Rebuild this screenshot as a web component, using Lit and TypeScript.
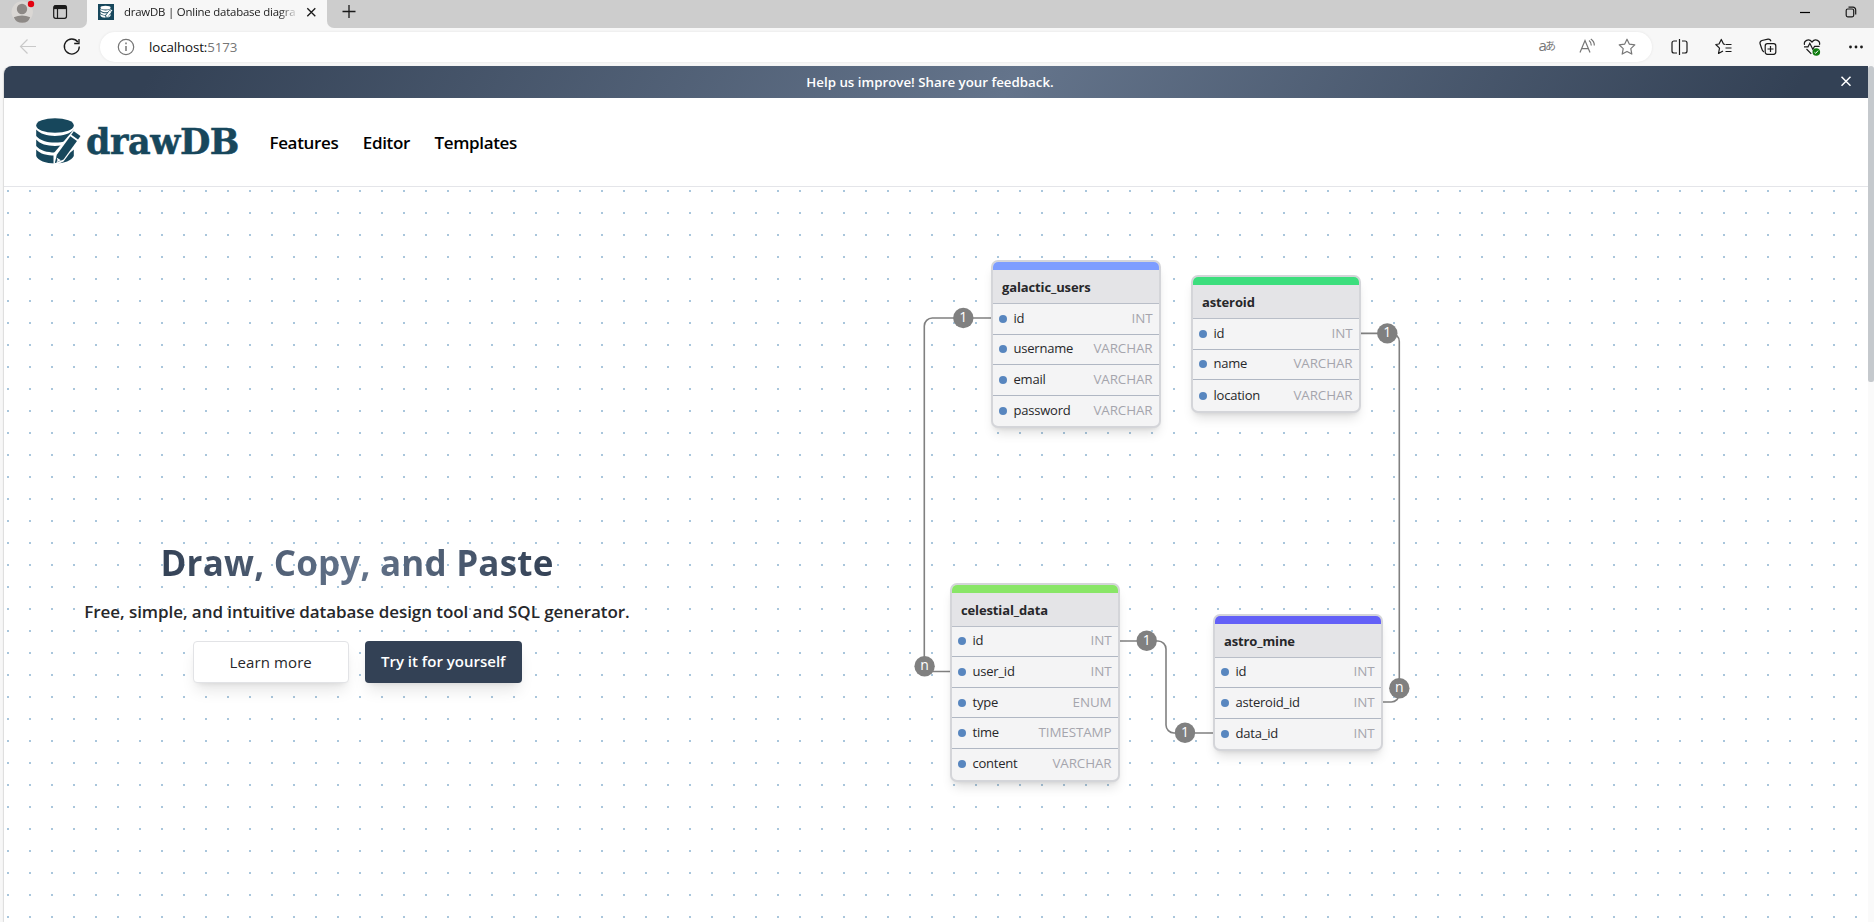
import { LitElement, html, svg, css } from "lit";
import { customElement, property } from "lit/decorators.js";

interface Field { name: string; type: string; }
interface TableData { name: string; color: string; x: number; y: number; fields: Field[]; }
interface Link { d: string; ends: { x: number; y: number; label: string }[]; }

const f = (name: string, type: string): Field => ({ name, type });

const TABLES: TableData[] = [
  { name: "galactic_users", color: "#7d9dff", x: 281, y: 73.3,
    fields: [f("id", "INT"), f("username", "VARCHAR"), f("email", "VARCHAR"), f("password", "VARCHAR")] },
  { name: "asteroid", color: "#3cde7d", x: 481, y: 88.4,
    fields: [f("id", "INT"), f("name", "VARCHAR"), f("location", "VARCHAR")] },
  { name: "celestial_data", color: "#89e667", x: 240, y: 396,
    fields: [f("id", "INT"), f("user_id", "INT"), f("type", "ENUM"), f("time", "TIMESTAMP"), f("content", "VARCHAR")] },
  { name: "astro_mine", color: "#6360f7", x: 503, y: 427,
    fields: [f("id", "INT"), f("asteroid_id", "INT"), f("data_id", "INT")] },
];

const LINKS: Link[] = [
  { d: "M281 131H222.3a8 8 0 0 0-8 8V484.5H240",
    ends: [{ x: 253.3, y: 131, label: "1" }, { x: 214.6, y: 479.3, label: "n" }] },
  { d: "M650 146.4H681.3a8 8 0 0 1 8 8V507a8 8 0 0 1-8 8H672.5",
    ends: [{ x: 677.3, y: 146.4, label: "1" }, { x: 689.3, y: 501.3, label: "n" }] },
  { d: "M410 454H448a8 8 0 0 1 8 8V538a8 8 0 0 0 8 8H503",
    ends: [{ x: 436.7, y: 453.8, label: "1" }, { x: 475, y: 545.8, label: "1" }] },
];

const databaseMark = svg`
  <ellipse cx="19" cy="7.5" rx="18.8" ry="7.3"/>
  <path d="M.2 11.6C4 16 11 17.9 19 17.9S34 16 37.8 11.6V18C34 22.6 27 24.6 19 24.6S4 22.6.2 18Z"/>
  <path d="M.2 21.5C4 26 11 27.9 19 27.9S34 26 37.8 21.5V28C34 32.5 27 34.5 19 34.5S4 32.5.2 28Z"/>
  <path d="M.2 31.5C4 36 11 37.6 19 37.6S34 36 37.8 31.5V38C36 42.5 28 45.4 19 45.4S1.5 42.5.2 38Z"/>
  <path class="cut" d="M37.8 11.5 46.5 18 27.5 43.5 17.5 48V35.5Z"/>
  <path d="M37.8 13.2 44.5 18 42 21.5 35.3 16.7Z"/>
  <path d="M34.3 18.2 41 23 27.5 41.5 18.8 45.2 20.8 36.7Z"/>
  <path class="cut" d="M20.5 39.5 25 42.2 20.5 44.2 21.5 42Z"/>`;

@customElement("db-logo")
class DbLogo extends LitElement {
  static styles = css`
    :host { display: flex; align-items: center; color: #17475c; }
    .mark { width: 46px; height: 48px; fill: #17475c; overflow: visible; }
    .cut { fill: #fff; }
    .word { font: 700 35px/44px "DejaVu Serif", serif; letter-spacing: -0.45px; margin: 0 0 0 4px; -webkit-text-stroke: 0.5px #17475c; }
  `;
  render() {
    return html`<svg class="mark" viewBox="0 0 46 48">${databaseMark}</svg><span class="word">drawDB</span>`;
  }
}

@customElement("db-table")
class DbTable extends LitElement {
  @property({ attribute: false }) table!: TableData;
  static styles = css`
    :host { display: block; width: 166px; border: 2px solid #d4d5d9; border-radius: 7px; overflow: hidden;
      background: #f4f4f5; box-shadow: 0 8px 12px -3px rgba(0,0,0,.12), 0 3px 5px -3px rgba(0,0,0,.12); }
    .strip { height: 8px; }
    .title { height: 32.7px; line-height: 34.7px; padding-left: 9px; background: #e4e4e7; color: #27272a;
      border-bottom: 1px solid #b9bec8; font-weight: 700; font-size: 13px; letter-spacing: -0.13px; }
    .row { box-sizing: border-box; height: 30.6px; display: flex; align-items: center; padding: 0 6.5px 0 6px;
      border-bottom: 1px solid #b0b7c3; font-size: 13px; letter-spacing: -0.22px; color: #27272a; }
    .row:last-child { border-bottom: 0; }
    .dot { width: 8px; height: 8px; border-radius: 50%; background: #5886bf; margin-right: 6.5px; }
    .name { flex: 1; padding-bottom: 2px; }
    .type { font-size: 13.4px; letter-spacing: -0.1px; color: #a5a5ad; padding-bottom: 2px; }
  `;
  render() {
    const t = this.table;
    return html`
      <div class="strip" style="background:${t.color}"></div>
      <div class="title">${t.name}</div>
      ${t.fields.map((x) => html`<div class="row"><span class="dot"></span><span class="name">${x.name}</span><span class="type">${x.type}</span></div>`)}`;
  }
}

@customElement("db-canvas")
class DbCanvas extends LitElement {
  static styles = css`
    :host { display: block; position: relative; }
    .links { display: block; width: 100%; height: 100%; }
    .line { fill: none; stroke: #808080; stroke-width: 1.6; }
    .end { fill: #808080; }
    .label { fill: #fff; font-size: 14px; text-anchor: middle; }
    .node { position: absolute; }
  `;
  render() {
    return html`
      <svg class="links">${LINKS.map((l) => svg`
        <path class="line" d=${l.d}/>
        ${l.ends.map((e) => svg`<circle class="end" cx=${e.x} cy=${e.y} r="10.2"/>
          <text class="label" x=${e.x} y=${e.y + 4}>${e.label}</text>`)}`)}
      </svg>
      ${TABLES.map((t) => html`<db-table class="node" style="left:${t.x}px;top:${t.y}px" .table=${t}></db-table>`)}`;
  }
}

@customElement("browser-chrome")
class BrowserChrome extends LitElement {
  static styles = css`
    :host { display: block; background: #f7f7f7; }
    svg { display: block; fill: none; stroke: #1a1a1a; stroke-width: 1.2; flex: none; }
    .strip { display: flex; height: 28px; }
    .left { width: 87px; background: #cdcdcd; border-bottom-right-radius: 7px; display: flex; box-sizing: border-box; }
    .tab { width: 240px; display: flex; align-items: center; box-sizing: border-box; padding: 0 7px 4px 11px; }
    .title { width: 178px; margin-left: 10px; white-space: nowrap; font-size: 11.4px; line-height: 18px;
      letter-spacing: -0.2px; color: #1b1b1b;
      -webkit-mask-image: linear-gradient(90deg, #000 155px, transparent 175px);
      mask-image: linear-gradient(90deg, #000 155px, transparent 175px); }
    .right { flex: 1; background: #cdcdcd; border-bottom-left-radius: 7px; display: flex; align-items: center;
      box-sizing: border-box; padding: 0 17px 4px 15px; gap: 34px; }
    .grow { flex: 1; }
    .bar { height: 38px; display: flex; align-items: center; box-sizing: border-box; padding: 0 6px 0 16px; }
    .reload { margin: 0 16px 0 20px; }
    .pill { flex: 1; height: 30px; border-radius: 15px; background: #fff; display: flex; align-items: center; gap: 16px;
      box-sizing: border-box; padding: 0 13px 0 14px; box-shadow: 0 0 3px rgba(0,0,0,.08); }
    .url { flex: 1; font-size: 13.3px; letter-spacing: -0.1px; margin-left: -5px; color: #111; }
    .port { color: #767676; }
    .soft { stroke: #767676; }
    .tools { display: flex; gap: 20.2px; margin-left: 15.5px; }
    .cjk { font: 15px "Open Sans", "Noto Sans CJK JP", sans-serif; fill: #767676; stroke: none; }
    .kana { font-size: 11px; }
    .mark { fill: #fff; stroke: none; }
    .cut { fill: #17475c; }
  `;
  render() {
    return html`
      <div class="strip">
        <div class="left"><svg width="87" height="28">
          <circle cx="22.2" cy="12" r="10.7" fill="#dad7d4" stroke="none"/>
          <circle cx="22" cy="9" r="5.2" fill="#8d8986" stroke="none"/>
          <path d="M13.8 17.2Q22 13.8 30.2 17.2Q28.5 22.7 22.2 22.7T13.8 17.2Z" fill="#8d8986" stroke="none"/>
          <circle cx="31" cy="4" r="3.2" fill="#e3000f" stroke="none"/>
          <rect x="53.7" y="5.7" width="12.8" height="12.6" rx="2"/><path d="M54 7.3H66.3" stroke-width="3.6"/><path d="M57.5 8v10"/>
        </svg></div>
        <div class="tab">
          <svg width="16" height="16" viewBox="0 0 16 16"><rect width="16" height="16" fill="#17475c" stroke="none"/>
            <g class="mark" transform="translate(2.4 1.6) scale(.27)">${databaseMark}</g></svg>
          <span class="title">drawDB | Online database diagra</span>
          <svg width="18" height="18"><path d="M5.3 5.2l8 8m0-8l-8 8" stroke-width="1.3"/></svg>
        </div>
        <div class="right">
          <svg width="14" height="14"><path d="M.5 6.5h13M7 0v13" stroke-width="1.3"/></svg>
          <span class="grow"></span>
          <svg width="12" height="12"><path d="M1 6.5h10" stroke="#000"/></svg>
          <svg width="12" height="12"><rect x="1.2" y="3" width="7.5" height="7.8" rx="1.5"/><path d="M3.5 1.2h4.5a2.7 2.7 0 0 1 2.7 2.7v4.5"/></svg>
        </div>
      </div>
      <div class="bar">
        <svg width="24" height="24"><path d="M20 11.5H4.5M11.5 4.5L4.5 11.5l7 7" stroke="#c9c9c9"/></svg>
        <svg class="reload" width="24" height="24"><path d="M17.8 7A7.5 7.5 0 1 0 19.3 11.5M19 4v4.5h-4.8" stroke-width="1.3"/></svg>
        <div class="pill">
          <svg class="soft" width="24" height="24"><circle cx="12" cy="12" r="7.7"/><path d="M12 11v5M12 7.6v1.6" stroke-width="1.5"/></svg>
          <span class="url">localhost:<span class="port">5173</span></span>
          <svg width="24" height="24"><text class="cjk" x="3.5" y="16">a</text><text class="cjk kana" x="10" y="15">あ</text></svg>
          <svg class="soft" width="24" height="24"><path d="M5 17.500L10 5.500l5 12M6.700 13.600h6.600M14 5.500q2.300 1.500 2.300 5M15.800 4q3.700 2.500 3.500 6.500"/></svg>
          <svg class="soft" width="24" height="24"><path d="M12 4.200l2.400 5 5.400.7-4 3.700 1 5.500L12 16.400l-4.800 2.700 1-5.500-4-3.700 5.400-.7Z" stroke-linejoin="round"/></svg>
        </div>
        <div class="tools">
          <svg width="24" height="24"><path d="M10 6H7a2 2 0 0 0-2 2v8a2 2 0 0 0 2 2h3M15 6h3a2 2 0 0 1 2 2v8a2 2 0 0 1-2 2h-3M12.500 4v16"/></svg>
          <svg width="24" height="24"><path d="M14 9.300l-1.500-.3L10.300 4.400 8 9 4.800 9.500 8.500 13.200l-1 5.300 4.500-2.500M14.500 9.500h6M14.500 13h6M14.500 16.500h6" stroke-linejoin="round"/></svg>
          <svg width="24" height="24"><path d="M8 17C6.500 16.500 6 15 5.500 13L4 8.500C3.700 7 4.500 6 6 5.500l6-1.300c1.500-.2 2.500.6 3 2"/><rect x="9.200" y="8.700" width="10.600" height="10.600" rx="2.200"/><path d="M14.500 11v6M11.500 14h6"/></svg>
          <svg width="24" height="24"><path d="M4.500 9.800C3.500 6 8.500 2.800 12 7c3.500-4.200 8.500-1 7.500 2.800M4 11.800h4l1.800-3.500 3 6 1.800-3h5M6.500 14l4.800 4.800"/><circle cx="16.300" cy="17" r="3.800" fill="#107c10" stroke="none"/><path d="M14.500 17.300l1.200 1 2.400-2.700" stroke="#fff" stroke-width="1"/></svg>
          <svg width="24" height="24"><g fill="#1a1a1a" stroke="none"><circle cx="6.500" cy="12" r="1.400"/><circle cx="12" cy="12" r="1.400"/><circle cx="17.500" cy="12" r="1.400"/></g></svg>
        </div>
      </div>`;
  }
}

@customElement("app-root")
class AppRoot extends LitElement {
  static styles = css`
    :host { display: flex; flex-direction: column; height: 922px; overflow: hidden; background: #f7f7f7;
      font-family: "Open Sans", "Noto Sans", sans-serif; }
    .view { flex: 1; display: flex; min-height: 0; }
    .page { flex: 1; margin-left: 4px; background: #fff; border-top-left-radius: 8px; overflow: hidden; display: flex; flex-direction: column;
      box-shadow: -1px 0 1px #dcdcdc; }
    .scroll { width: 6px; background: #fafafa; }
    .thumb { height: 316px; background: #c5c9cd; border-radius: 4px 4px 3px 3px; }
    .banner { height: 32px; display: flex; align-items: center; color: #fff; font-weight: 600; font-size: 13.3px;
      background: linear-gradient(120deg, #334155 8%, #64748b 54%, #334155 96%); box-sizing: border-box; padding: 0 15px 0 17px; }
    .msg { flex: 1; text-align: center; }
    .close { stroke: #fff; stroke-width: 1.5; fill: none; }
    .nav { height: 88px; display: flex; align-items: center; border-bottom: 1px solid #e4e5e9; padding-left: 32px; }
    .links { display: flex; gap: 24.5px; margin: 1px 0 0 30.5px; font-weight: 600; font-size: 17px; letter-spacing: -0.35px; color: #000; }
    .hero { flex: 1; display: flex; min-height: 0;
      background: conic-gradient(from 270deg at 2px 2px, #a9c6dc 90deg, transparent 0) 3px 3px / 22px 22px; }
    .intro { width: 706px; box-sizing: border-box; padding-top: 356px; display: flex; flex-direction: column; align-items: center; }
    .title { font-weight: 700; font-size: 35px; line-height: 40px; letter-spacing: 0.2px; color: transparent; white-space: nowrap; padding-bottom: 4px;
      background: linear-gradient(90deg, #334155, #64748b 50%, #334155); -webkit-background-clip: text; background-clip: text; }
    .sub { font-weight: 600; font-size: 17px; line-height: 28px; letter-spacing: -0.06px; color: #27272a; margin: 10.5px 0 15.5px; white-space: nowrap; }
    .actions { display: flex; gap: 16px; }
    .btn { width: 156.5px; height: 42px; box-sizing: border-box; border-radius: 4px; display: flex; align-items: center; justify-content: center;
      font-size: 15px; box-shadow: 0 10px 15px -3px rgba(0,0,0,.1), 0 4px 6px -4px rgba(0,0,0,.1); }
    .plain { background: #fff; border: 1px solid #e2e3e6; color: #27272a; font-weight: 500; letter-spacing: 0.1px; }
    .solid { background: #334155; color: #fff; font-weight: 600; padding-bottom: 2px; }
    .canvas { flex: 1; }
  `;
  render() {
    return html`
      <browser-chrome></browser-chrome>
      <div class="view">
        <div class="page">
          <div class="banner"><span class="msg">Help us improve! Share your feedback.</span>
            <svg class="close" width="14" height="14"><path d="M2.5 1.700l9 9m0-9l-9 9"/></svg></div>
          <div class="nav"><db-logo></db-logo>
            <div class="links"><span>Features</span><span>Editor</span><span>Templates</span></div></div>
          <div class="hero">
            <div class="intro">
              <div class="title">Draw, Copy, and Paste</div>
              <div class="sub">Free, simple, and intuitive database design tool and SQL generator.</div>
              <div class="actions"><div class="btn plain">Learn more</div><div class="btn solid">Try it for yourself</div></div>
            </div>
            <db-canvas class="canvas"></db-canvas>
          </div>
        </div>
        <div class="scroll"><div class="thumb"></div></div>
      </div>`;
  }
}
